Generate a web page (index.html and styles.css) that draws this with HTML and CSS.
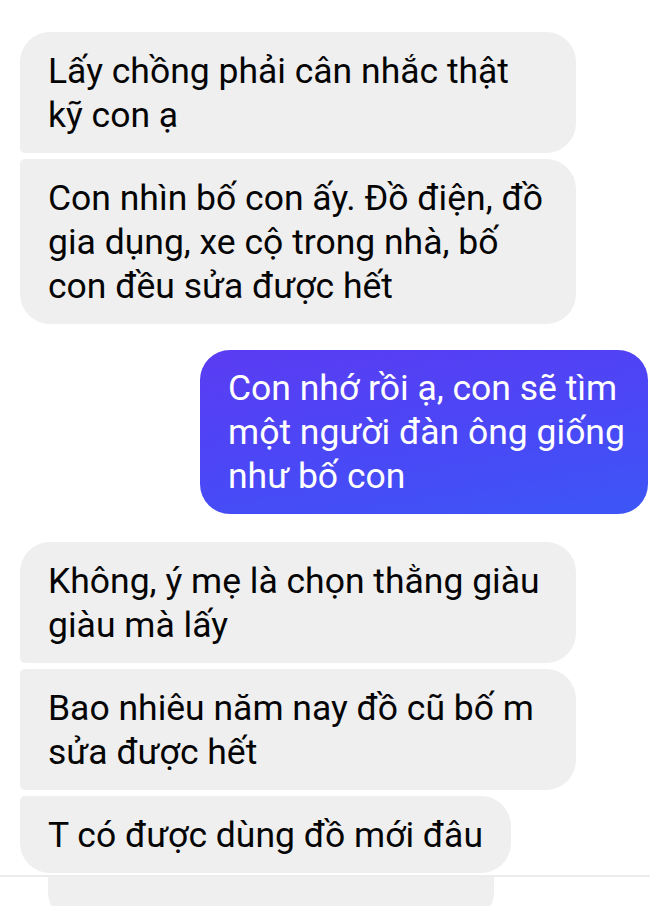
FILE: index.html
```html
<!DOCTYPE html>
<html lang="vi">
<head>
    <meta charset="UTF-8">
    <meta name="viewport" content="width=device-width, initial-scale=1.0">
    <title>Tin nhắn</title>
    <link rel="stylesheet" href="styles.css">
</head>
<body>
    <div class="thread">
        <div class="msg in first">Lấy chồng phải cân nhắc thật kỹ con ạ</div>
        <div class="msg in last">Con nhìn bố con ấy. Đồ điện, đồ gia dụng, xe cộ trong nhà, bố con đều sửa được hết</div>

        <div class="msg out">Con nhớ rồi ạ, con sẽ tìm một người đàn ông giống như bố con</div>

        <div class="msg in first">Không, ý mẹ là chọn thằng giàu giàu mà lấy</div>
        <div class="msg in middle">Bao nhiêu năm nay đồ cũ bố m sửa được hết</div>
        <div class="msg in last">T có được dùng đồ mới đâu</div>
    </div>

    <div class="composer">
        <div class="composer-box"></div>
    </div>
</body>
</html>
```

FILE: styles.css
```css
body {
    margin: 0;
    background: #fff;
    font-family: Roboto, "Noto Sans", sans-serif;
    height: 906px;
    overflow: hidden;
}
.thread {
    display: flex;
    flex-direction: column;
    padding-top: 32px;
}
.msg {
    box-sizing: border-box;
    width: fit-content;
    max-width: 556px;
    padding: 17px 28px 16px;
    font-size: 35.5px;
    line-height: 44px;
    border-radius: 30px;
}
.msg.in {
    align-self: flex-start;
    margin-left: 20px;
    background: #efefef;
    color: #050505;
}
.msg.in + .msg.in {
    margin-top: 6px;
}
.msg.first {
    border-bottom-left-radius: 5px;
}
.msg.middle {
    border-top-left-radius: 5px;
    border-bottom-left-radius: 5px;
}
.msg.last {
    border-top-left-radius: 5px;
}
.msg.out {
    align-self: flex-end;
    margin: 26px 2px 28px 0;
    width: 448px;
    max-width: none;
    padding: 16px 14px 16px 28px;
    color: #fff;
    background: linear-gradient(170deg, #5b3cf3 0%, #4a48f6 55%, #3c56f6 100%);
}
.composer {
    margin-top: 2px;
    border-top: 2px solid #ececec;
    padding-left: 48px;
}
.composer-box {
    width: 446px;
    height: 40px;
    background: #efefef;
    border-radius: 0 0 24px 24px;
}
```
